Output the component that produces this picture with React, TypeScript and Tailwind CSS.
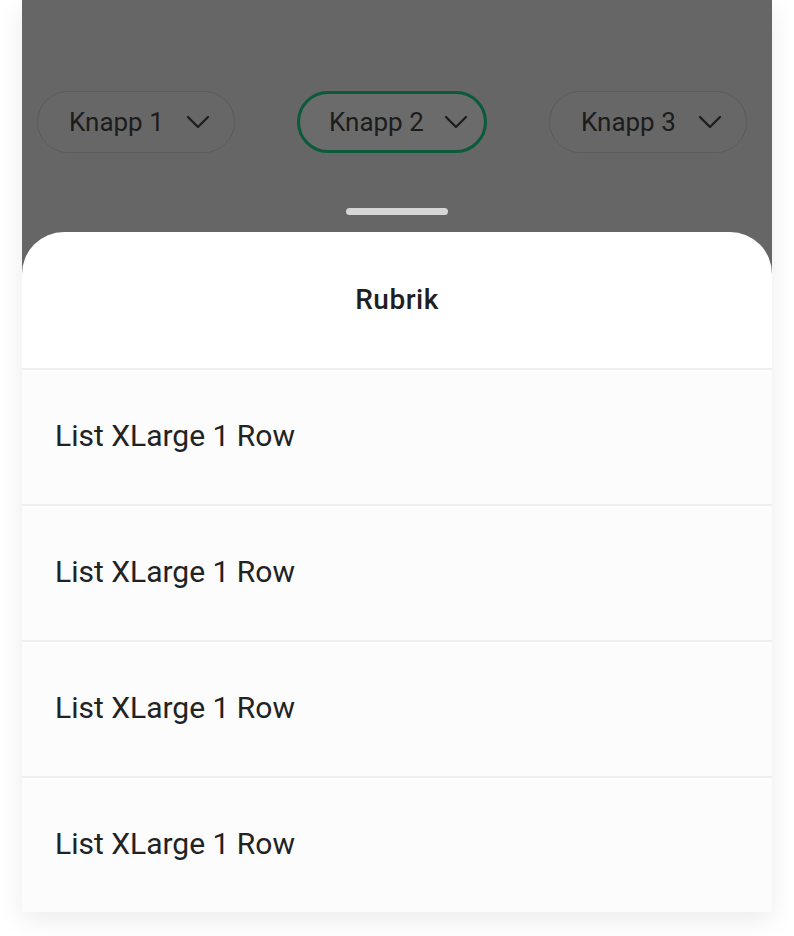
import React from "react";

function Chevron() {
  return (
    <svg width="24" height="14" viewBox="0 0 24 14" fill="none">
      <path d="M2 2 L12 12 L22 2" stroke="#1c1c1c" strokeWidth="2.2" strokeLinecap="round" strokeLinejoin="round" />
    </svg>
  );
}

function Pill({ label, active }: { label: string; active?: boolean }) {
  return (
    <div
      className={
        active
          ? "flex h-[62px] w-[190px] shrink-0 items-center gap-[20px] whitespace-nowrap rounded-full border-[3px] border-[#0b5a3a] bg-[#6b6b6b] pl-[29px]"
          : "flex h-[62px] w-[198px] shrink-0 items-center gap-[22px] whitespace-nowrap rounded-full border border-[#5c5c5c] bg-[#676767] pl-[31px]"
      }
    >
      <span className="text-[26px] leading-none text-[#1c1c1c]">{label}</span>
      <Chevron />
    </div>
  );
}

function Row() {
  return (
    <div className="flex h-[136px] items-center border-t-2 border-[#efefef] bg-[#fcfcfc] pb-[3px] pl-[33px]">
      <span className="text-[30px] leading-none text-[#222222]">List XLarge 1 Row</span>
    </div>
  );
}

export default function App() {
  return (
    <div className="min-h-[936px] w-[794px] bg-white" style={{ fontFamily: "Roboto, 'Liberation Sans', sans-serif" }}>
      <div className="mx-[22px] w-[750px] bg-[#666666] shadow-[0_8px_24px_rgba(0,0,0,0.08)]">
        <div className="flex h-[232px] flex-col">
          <div className="mt-[91px] flex gap-[62px] pl-[15px]">
            <Pill label="Knapp 1" />
            <Pill label="Knapp 2" active />
            <Pill label="Knapp 3" />
          </div>
          <div className="mt-[55px] flex justify-center">
            <div className="h-[7px] w-[102px] rounded-full bg-[#d6d6d6]" />
          </div>
        </div>
        <div className="overflow-hidden rounded-t-[42px] bg-white">
          <div className="flex h-[136px] items-center justify-center">
            <span className="text-[28px] font-medium tracking-[0.5px] text-[#1f1f1f]">Rubrik</span>
          </div>
          <Row />
          <Row />
          <Row />
          <Row />
        </div>
      </div>
    </div>
  );
}
